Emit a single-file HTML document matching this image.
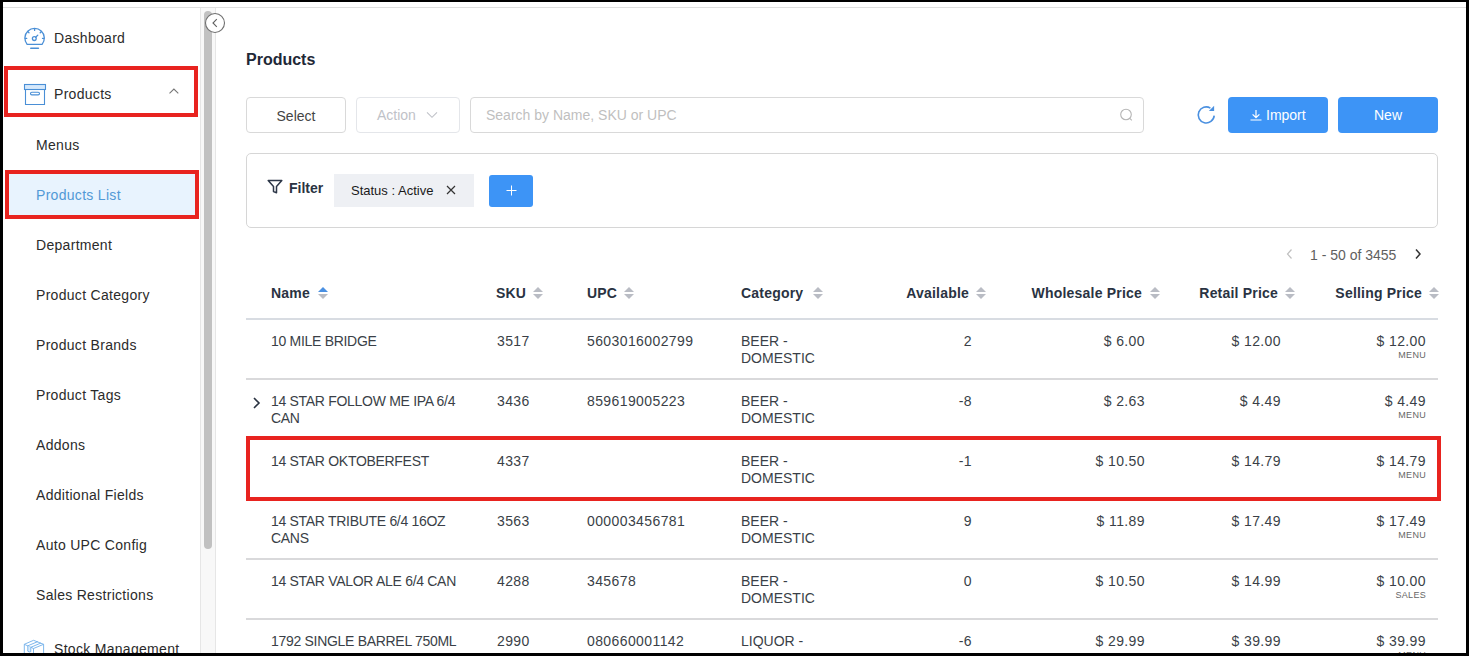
<!DOCTYPE html>
<html><head><meta charset="utf-8">
<style>
*{box-sizing:border-box;margin:0;padding:0}
html,body{width:1469px;height:656px;overflow:hidden;background:#fff}
body{font-family:"Liberation Sans",sans-serif;font-size:14px;color:#262626;position:relative}
#scr{position:absolute;left:0;top:0;width:1469px;height:656px;background:#fff;overflow:hidden}
.a{position:absolute;white-space:nowrap}
.t{position:absolute;white-space:nowrap;line-height:20px;height:20px}
.nav{color:#2b2b2b;font-size:14px;letter-spacing:0.3px}
.hd{font-weight:bold;color:#2a3342;font-size:14px;letter-spacing:0.2px}
.cell{color:#3a3f47;font-size:14px;line-height:17px}
.num{letter-spacing:0.4px}
.nm{letter-spacing:-0.3px}
.tag{color:#666;font-size:9px;line-height:10px;letter-spacing:0.3px}
.red{position:absolute;border:4px solid #e8231f}
</style></head><body>
<div id="scr">
  <div class="a" style="left:0;top:7px;width:1469px;height:1px;background:#dedede"></div>

  <!-- ===== SIDEBAR ===== -->
  <svg class="a" style="left:0;top:0" width="200" height="656" viewBox="0 0 200 656" fill="none">
    <!-- dashboard gauge -->
    <g stroke="#4a8fd6" stroke-width="1.3" stroke-linecap="round">
      <path d="M27.1 44.3 A9.7 9.7 0 1 1 42.1 44.3 Z" stroke-linejoin="round"/>
      <path d="M34.6 28.9 V30.4 M25.2 38.4 H26.7 M44 38.4 H42.5 M28 31.8 L29 32.8 M41.2 31.8 L40.2 32.8"/>
      <circle cx="34.3" cy="38.6" r="1.9"/>
      <path d="M35.7 37.2 L37.8 35.1"/>
      <path d="M30.8 48.2 H38.4" stroke-width="1.6"/>
    </g>
    <!-- products box -->
    <g stroke="#4a8fd6" stroke-width="1.1">
      <rect x="24.5" y="84.5" width="21" height="5" fill="#d6e8fb"/>
      <path d="M25.5 89.5 V104.5 H44.5 V89.5"/>
      <rect x="30.5" y="92.3" width="9" height="2.6" rx="1.3"/>
    </g>
    <path d="M169.5 93.4 L173.9 89.1 L178.3 93.4" stroke="#777" stroke-width="1.1"/>
    <!-- stock box -->
    <g stroke="#72b0ea" stroke-width="0.9" stroke-linejoin="round">
      <path d="M24.3 644.3 L33.6 640.3 L43.6 644.3 L33.5 648.5 Z"/>
      <path d="M24.3 644.3 V656 M33.5 648.5 V656 M43.6 644.3 V656"/>
      <path d="M27.8 645.8 L37.8 641.6 M31 647.2 L41 643"/>
      <path d="M27.8 645.8 V651.2 Q29.2 652.6 30.8 651.6 V647.1" fill="#dceefc"/>
    </g>
  </svg>
  <div class="t nav" style="left:54px;top:28px">Dashboard</div>
  <div class="t nav" style="left:54px;top:84px">Products</div>
  <div class="t nav" style="left:36px;top:135px">Menus</div>
  <div class="a" style="left:8px;top:173px;width:187px;height:43px;background:#e8f3fe"></div>
  <div class="t nav" style="left:36px;top:185px;color:#5199d6">Products List</div>
  <div class="t nav" style="left:36px;top:235px">Department</div>
  <div class="t nav" style="left:36px;top:285px">Product Category</div>
  <div class="t nav" style="left:36px;top:335px">Product Brands</div>
  <div class="t nav" style="left:36px;top:385px">Product Tags</div>
  <div class="t nav" style="left:36px;top:435px">Addons</div>
  <div class="t nav" style="left:36px;top:485px">Additional Fields</div>
  <div class="t nav" style="left:36px;top:535px">Auto UPC Config</div>
  <div class="t nav" style="left:36px;top:585px">Sales Restrictions</div>
  <div class="t nav" style="left:54px;top:639px">Stock Management</div>
  <!-- red boxes -->
  <div class="red" style="left:4px;top:66px;width:194px;height:51px"></div>
  <div class="red" style="left:5px;top:170px;width:194px;height:49px"></div>

  <!-- scrollbar -->
  <div class="a" style="left:200px;top:8px;width:16px;height:648px;background:#f8f8f8;border-left:1px solid #e6e6e6;border-right:1px solid #e6e6e6"></div>
  <div class="a" style="left:204px;top:11px;width:8px;height:538px;background:#c1c1c1;border-radius:4px"></div>
  <!-- collapse btn -->
  <svg class="a" style="left:204px;top:12px" width="22" height="22" viewBox="0 0 22 22"><circle cx="11" cy="11" r="9.5" fill="#fff" stroke="#707070" stroke-width="1.1"/><path d="M12.8 7.2 L9 11 L12.8 14.8" fill="none" stroke="#606060" stroke-width="1.1"/></svg>

  <!-- ===== MAIN ===== -->
  <div class="a" style="left:246px;top:49px;font-size:16px;font-weight:bold;color:#1f2937;line-height:22px">Products</div>

  <!-- toolbar -->
  <div class="a" style="left:246px;top:97px;width:100px;height:36px;border:1px solid #d9d9d9;border-radius:4px;text-align:center;line-height:36px;color:#444">Select</div>
  <div class="a" style="left:356px;top:97px;width:104px;height:36px;border:1px solid #e4e6ea;border-radius:4px;line-height:34px;color:#bfc2c8;padding-left:20px">Action
    <svg style="position:absolute;left:69px;top:13px" width="12" height="8" viewBox="0 0 12 8" fill="none" stroke="#c0c2c8" stroke-width="1.1"><path d="M1 1.3 L6 6.3 L11 1.3"/></svg>
  </div>
  <div class="a" style="left:470px;top:97px;width:674px;height:36px;border:1px solid #d9d9d9;border-radius:4px;line-height:34px;color:#bfbfbf;padding-left:15px">Search by Name, SKU or UPC
    <svg style="position:absolute;left:648px;top:10px" width="14" height="14" viewBox="0 0 14 14" fill="none" stroke="#b5b5b5" stroke-width="1.1"><circle cx="7" cy="6.5" r="5.3"/><path d="M10.8 10.3 L12.8 12.3"/></svg>
  </div>
  <!-- refresh -->
  <svg class="a" style="left:1195px;top:104px" width="22" height="22" viewBox="0 0 22 22" fill="none"><path d="M19.2 11.6 A8 8 0 1 1 15.4 4.1" stroke="#4a90e0" stroke-width="1.6"/><path d="M13.9 7 H19.1 V1.8 Z" fill="#4a90e0"/></svg>
  <div class="a" style="left:1228px;top:97px;width:100px;height:36px;background:#3d94f6;border-radius:4px;color:#fff;line-height:36px;padding-left:38px">Import
    <svg style="position:absolute;left:22px;top:13px" width="12" height="11" viewBox="0 0 12 11" fill="none" stroke="#fff" stroke-width="1.2"><path d="M6 0 V7.5 M2.6 4.3 L6 7.7 L9.4 4.3 M0.5 10 H11.5"/></svg>
  </div>
  <div class="a" style="left:1338px;top:97px;width:100px;height:36px;background:#3d94f6;border-radius:4px;color:#fff;line-height:36px;text-align:center">New</div>

  <!-- filter box -->
  <div class="a" style="left:246px;top:153px;width:1192px;height:75px;border:1px solid #d6d6d6;border-radius:5px"></div>
  <svg class="a" style="left:267px;top:179px" width="16" height="16" viewBox="0 0 16 16" fill="none" stroke="#2d3748" stroke-width="1.5" stroke-linejoin="round"><path d="M1.2 1.5 H14.8 L9.5 7.6 V13.8 L6.5 12.6 V7.6 Z"/></svg>
  <div class="t" style="left:289px;top:178px;font-weight:bold;color:#2a3342">Filter</div>
  <div class="a" style="left:334px;top:174px;width:140px;height:33px;background:#eef0f4;line-height:33px;padding-left:17px;color:#1a1a1a;font-size:13px">Status : Active
    <svg style="position:absolute;left:112px;top:11px" width="10" height="10" viewBox="0 0 10 10" stroke="#333" stroke-width="1.2"><path d="M1 1 L9 9 M9 1 L1 9"/></svg>
  </div>
  <div class="a" style="left:489px;top:175px;width:44px;height:32px;background:#3d94f6;border-radius:3px"><svg style="position:absolute;left:17px;top:10px" width="11" height="11" viewBox="0 0 11 11" stroke="#fff" stroke-width="1"><path d="M5.5 0.5 V10.5 M0.5 5.5 H10.5"/></svg></div>

  <!-- pagination -->
  <svg class="a" style="left:1285px;top:248px" width="10" height="12" viewBox="0 0 10 12" fill="none" stroke="#c0c0c0" stroke-width="1.2"><path d="M6.5 1.5 L2.5 6 L6.5 10.5"/></svg>
  <div class="t" style="left:1310px;top:245px;color:#5f5f5f">1 - 50 of 3455</div>
  <svg class="a" style="left:1413px;top:248px" width="10" height="12" viewBox="0 0 10 12" fill="none" stroke="#333" stroke-width="1.5"><path d="M3 1.5 L7 6 L3 10.5"/></svg>

<!--TBL-->
<div class="t hd" style="left:271px;top:283px">Name</div>
<div class="t hd" style="left:496px;top:283px">SKU</div>
<div class="t hd" style="left:587px;top:283px">UPC</div>
<div class="t hd" style="left:741px;top:283px">Category</div>
<div class="t hd" style="right:500px;top:283px">Available</div>
<div class="t hd" style="right:327px;top:283px">Wholesale Price</div>
<div class="t hd" style="right:191px;top:283px">Retail Price</div>
<div class="t hd" style="right:47px;top:283px">Selling Price</div>
<svg class="a" style="left:318px;top:287px" width="10" height="12" viewBox="0 0 10 12"><path d="M5 0 L10 5 H0 Z" fill="#4a90e2"/><path d="M5 12 L10 7 H0 Z" fill="#b9bcc4"/></svg>
<svg class="a" style="left:533px;top:287px" width="10" height="12" viewBox="0 0 10 12"><path d="M5 0 L10 5 H0 Z" fill="#b9bcc4"/><path d="M5 12 L10 7 H0 Z" fill="#b9bcc4"/></svg>
<svg class="a" style="left:624px;top:287px" width="10" height="12" viewBox="0 0 10 12"><path d="M5 0 L10 5 H0 Z" fill="#b9bcc4"/><path d="M5 12 L10 7 H0 Z" fill="#b9bcc4"/></svg>
<svg class="a" style="left:813px;top:287px" width="10" height="12" viewBox="0 0 10 12"><path d="M5 0 L10 5 H0 Z" fill="#b9bcc4"/><path d="M5 12 L10 7 H0 Z" fill="#b9bcc4"/></svg>
<svg class="a" style="left:976px;top:287px" width="10" height="12" viewBox="0 0 10 12"><path d="M5 0 L10 5 H0 Z" fill="#b9bcc4"/><path d="M5 12 L10 7 H0 Z" fill="#b9bcc4"/></svg>
<svg class="a" style="left:1150px;top:287px" width="10" height="12" viewBox="0 0 10 12"><path d="M5 0 L10 5 H0 Z" fill="#b9bcc4"/><path d="M5 12 L10 7 H0 Z" fill="#b9bcc4"/></svg>
<svg class="a" style="left:1285px;top:287px" width="10" height="12" viewBox="0 0 10 12"><path d="M5 0 L10 5 H0 Z" fill="#b9bcc4"/><path d="M5 12 L10 7 H0 Z" fill="#b9bcc4"/></svg>
<svg class="a" style="left:1429px;top:287px" width="10" height="12" viewBox="0 0 10 12"><path d="M5 0 L10 5 H0 Z" fill="#b9bcc4"/><path d="M5 12 L10 7 H0 Z" fill="#b9bcc4"/></svg>
<div class="a" style="left:246px;top:318px;width:1192px;height:2px;background:#d8dce2"></div>
<div class="a" style="left:246px;top:378px;width:1192px;height:2px;background:#d9d9db"></div>
<div class="a cell nm" style="left:271px;top:333px">10 MILE BRIDGE</div>
<div class="a cell num" style="left:497px;top:333px">3517</div>
<div class="a cell num" style="left:587px;top:333px">5603016002799</div>
<div class="a cell" style="left:741px;top:333px">BEER -<br>DOMESTIC</div>
<div class="a cell num" style="right:497px;top:333px">2</div>
<div class="a cell num" style="right:324px;top:333px">$ 6.00</div>
<div class="a cell num" style="right:188px;top:333px">$ 12.00</div>
<div class="a cell num" style="right:43px;top:333px">$ 12.00</div>
<div class="a tag" style="right:43px;top:350px">MENU</div>
<div class="a" style="left:246px;top:438px;width:1192px;height:2px;background:#d9d9db"></div>
<svg class="a" style="left:251px;top:397px" width="10" height="12" viewBox="0 0 10 12" fill="none" stroke="#2a3342" stroke-width="1.6"><path d="M3 1 L8 6 L3 11"/></svg>
<div class="a cell nm" style="left:271px;top:393px">14 STAR FOLLOW ME IPA 6/4<br>CAN</div>
<div class="a cell num" style="left:497px;top:393px">3436</div>
<div class="a cell num" style="left:587px;top:393px">859619005223</div>
<div class="a cell" style="left:741px;top:393px">BEER -<br>DOMESTIC</div>
<div class="a cell num" style="right:497px;top:393px">-8</div>
<div class="a cell num" style="right:324px;top:393px">$ 2.63</div>
<div class="a cell num" style="right:188px;top:393px">$ 4.49</div>
<div class="a cell num" style="right:43px;top:393px">$ 4.49</div>
<div class="a tag" style="right:43px;top:410px">MENU</div>
<div class="a" style="left:246px;top:498px;width:1192px;height:2px;background:#d9d9db"></div>
<div class="a cell nm" style="left:271px;top:453px">14 STAR OKTOBERFEST</div>
<div class="a cell num" style="left:497px;top:453px">4337</div>
<div class="a cell" style="left:741px;top:453px">BEER -<br>DOMESTIC</div>
<div class="a cell num" style="right:497px;top:453px">-1</div>
<div class="a cell num" style="right:324px;top:453px">$ 10.50</div>
<div class="a cell num" style="right:188px;top:453px">$ 14.79</div>
<div class="a cell num" style="right:43px;top:453px">$ 14.79</div>
<div class="a tag" style="right:43px;top:470px">MENU</div>
<div class="a" style="left:246px;top:558px;width:1192px;height:2px;background:#d9d9db"></div>
<div class="a cell nm" style="left:271px;top:513px">14 STAR TRIBUTE 6/4 16OZ<br>CANS</div>
<div class="a cell num" style="left:497px;top:513px">3563</div>
<div class="a cell num" style="left:587px;top:513px">000003456781</div>
<div class="a cell" style="left:741px;top:513px">BEER -<br>DOMESTIC</div>
<div class="a cell num" style="right:497px;top:513px">9</div>
<div class="a cell num" style="right:324px;top:513px">$ 11.89</div>
<div class="a cell num" style="right:188px;top:513px">$ 17.49</div>
<div class="a cell num" style="right:43px;top:513px">$ 17.49</div>
<div class="a tag" style="right:43px;top:530px">MENU</div>
<div class="a" style="left:246px;top:618px;width:1192px;height:2px;background:#d9d9db"></div>
<div class="a cell nm" style="left:271px;top:573px">14 STAR VALOR ALE 6/4 CAN</div>
<div class="a cell num" style="left:497px;top:573px">4288</div>
<div class="a cell num" style="left:587px;top:573px">345678</div>
<div class="a cell" style="left:741px;top:573px">BEER -<br>DOMESTIC</div>
<div class="a cell num" style="right:497px;top:573px">0</div>
<div class="a cell num" style="right:324px;top:573px">$ 10.50</div>
<div class="a cell num" style="right:188px;top:573px">$ 14.99</div>
<div class="a cell num" style="right:43px;top:573px">$ 10.00</div>
<div class="a tag" style="right:43px;top:590px">SALES</div>
<div class="a cell nm" style="left:271px;top:633px">1792 SINGLE BARREL 750ML</div>
<div class="a cell num" style="left:497px;top:633px">2990</div>
<div class="a cell num" style="left:587px;top:633px">080660001142</div>
<div class="a cell" style="left:741px;top:633px">LIQUOR -</div>
<div class="a cell num" style="right:497px;top:633px">-6</div>
<div class="a cell num" style="right:324px;top:633px">$ 29.99</div>
<div class="a cell num" style="right:188px;top:633px">$ 39.99</div>
<div class="a cell num" style="right:43px;top:633px">$ 39.99</div>
<div class="a tag" style="right:43px;top:650px">MENU</div>
<div class="red" style="left:246px;top:436px;width:1195px;height:65px"></div>
<!--/TBL-->
  <div class="a" style="left:0;top:0;width:1469px;height:2px;background:#000"></div>
  <div class="a" style="left:0;top:0;width:3px;height:656px;background:#000"></div>
  <div class="a" style="left:1466px;top:0;width:3px;height:656px;background:#000"></div>
  <div class="a" style="left:0;top:653px;width:1469px;height:3px;background:#000"></div>
</div>
</body></html>
